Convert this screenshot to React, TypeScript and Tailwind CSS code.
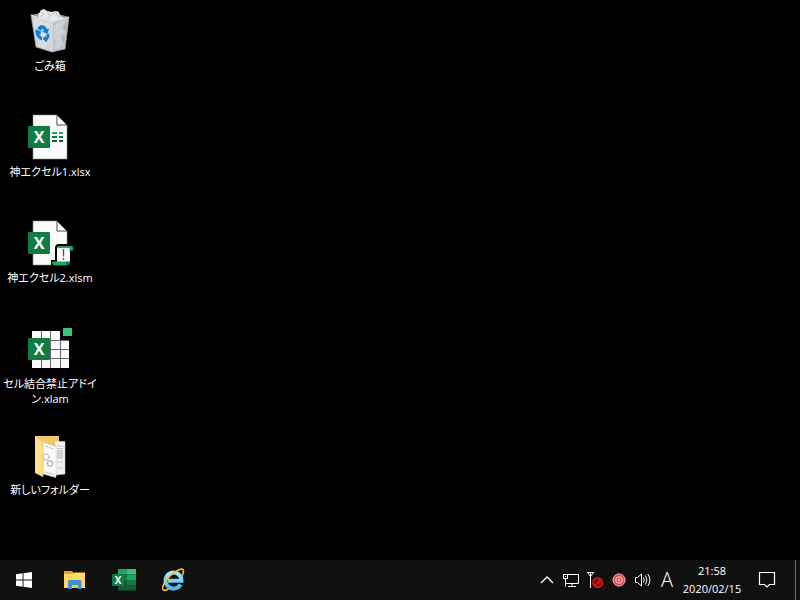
import type { ReactNode } from 'react';

const ExcelBadge = () => (
  <>
    <rect x="2" y="14" width="22" height="22" rx="1" fill="#107c41" />
    <text
      x="13"
      y="31"
      textAnchor="middle"
      fill="#fff"
      className="font-['Open_Sans',sans-serif] text-[16px] font-bold"
    >
      X
    </text>
  </>
);

const Page = () => (
  <>
    <path d="M7 3H31L41 13V47H7Z" fill="#fafafa" stroke="#8f8f8f" strokeWidth="0.6" />
    <path d="M31 3V13H41Z" fill="#fff" stroke="#4a4a4a" strokeWidth="1" />
  </>
);

const RecycleBinIcon = () => (
  <svg width="48" height="48" viewBox="0 0 48 48" aria-hidden="true">
    <path d="M5 9L22 5L43 11L26 16Z" fill="#8d9093" />
    <path d="M12 9L15 4L18 3L21 5L25 6L30 5L33 6L34 10L39 12L27 15.5L13 12Z" fill="#e6e8ea" />
    <path d="M15 5L18 8L15 11M21 5L24 10L30 6M24 10L22 13M30 6L33 12" fill="none" stroke="#b5b9bd" strokeWidth="0.8" />
    <path d="M5 9L26 16V46L10 41Z" fill="#d3d6d8" />
    <path d="M26 16L43 11L39 43L26 46Z" fill="#c3c6c9" />
    <path d="M8 14L14 12L18 17L24 16V24L20 28L24 34L18 42L12 39L14 34L9 28Z" fill="#dcdfe1" />
    <path d="M28 20L34 16L40 14L36 21L39 27L33 29L38 35L33 42L28 43L31 36L28 31Z" fill="#cfd2d4" />
    <path d="M41 14L37 21L40 26ZM39 29L35 32L38 37Z" fill="#acb0b3" />
    <path d="M5 9L26 16L43 11" fill="none" stroke="#e8eaeb" strokeWidth="1" />
    <path d="M5 9L10 41L26 46L39 43L43 11" fill="none" stroke="#a4a8ab" strokeWidth="0.7" />
    <path d="M26 16V46" stroke="#e2e4e5" strokeWidth="0.8" />
    <g fill="#1380d8">
      <path d="M12 21L15 19L19 20L21 23L23 22.5L21.5 28L16 25.5L18 24.5L16.5 22.5L14.8 25L11.5 22.8Z" />
      <path d="M10.5 23.5L15 25.5L14.5 28.5L13 28.5L16 31V34.5L13 33L10 29L9.3 25.5L9 24.5Z" />
      <path d="M20 28.8L23 27.5L23.5 31L21 34.7L20.5 36.5L16.6 32.8L20 29.5V31L21 30.5Z" />
    </g>
  </svg>
);

const XlsxIcon = () => (
  <svg width="48" height="48" viewBox="0 0 48 48" aria-hidden="true">
    <Page />
    <path d="M26 21H31M33 21H37" stroke="#21a366" strokeWidth="2" />
    <path d="M26 25H31M33 25H37" stroke="#107c41" strokeWidth="2" />
    <path d="M26 29H31M33 29H37" stroke="#185c37" strokeWidth="2" />
    <ExcelBadge />
  </svg>
);

const XlsmIcon = () => (
  <svg width="48" height="48" viewBox="0 0 48 48" aria-hidden="true">
    <Page />
    <path d="M29 30Q29 26 33 26H48V34H46V49H25V42H29Z" fill="#000" />
    <path d="M31 44V30.5Q31 28.5 33 28.5H44V44Z" fill="#fafafa" />
    <path d="M33 28H45Q48 28 47 32.5H43.5V30H32Q32 28.4 33 28Z" fill="#21a366" />
    <path d="M26 43.5H40V47.5H29Q26 47 26 43.5Z" fill="#21a366" />
    <path d="M40 43.5H44V45Q43.5 47.5 40 47.5Z" fill="#107c41" />
    <path d="M37.5 31V38.500M37.5 40V42" stroke="#555" strokeWidth="1.3" />
    <ExcelBadge />
  </svg>
);

const XlamIcon = () => (
  <svg width="48" height="48" viewBox="0 0 48 48" aria-hidden="true">
    <path d="M6 7H34V16H43V44H6Z" fill="#fafafa" />
    <path d="M15.5 7V44M24.5 7V44M34.5 16V44M6 16.5H43M6 25.5H43M6 34.5H43" stroke="#666" strokeWidth="1" />
    <rect x="37" y="4" width="9" height="8" fill="#33c481" />
    <ExcelBadge />
  </svg>
);

const FolderIcon = () => (
  <svg width="48" height="48" viewBox="0 0 48 48" aria-hidden="true">
    <path d="M9 6H33V40H9Z" fill="#f0c968" />
    <path d="M29 11L39 11.5V44L30 45Z" fill="#f1f1f1" stroke="#c9c9c9" strokeWidth="0.5" />
    <path d="M31 16H37M31 18.5H37M31 32H37M31 38H37" stroke="#b5b5b5" strokeWidth="0.7" />
    <rect x="31" y="20" width="6" height="9" fill="#d2d2d2" />
    <path d="M17 12L30 17V47.5L17 44Z" fill="#fafafa" stroke="#cfcfcf" strokeWidth="0.5" />
    <path d="M19 16L28 19" stroke="#888" strokeWidth="0.7" strokeDasharray="1.5 0.8" />
    <path d="M19 42L28 44.5" stroke="#aaa" strokeWidth="0.7" />
    <circle cx="20" cy="27" r="3" fill="none" stroke="#b8b8b8" strokeWidth="1.4" strokeDasharray="1.5 0.6" />
    <circle cx="24" cy="33.5" r="2.6" fill="none" stroke="#a5a5a5" strokeWidth="1.6" strokeDasharray="1.3 0.5" />
    <path d="M9 6L17 13V47L9 43Z" fill="#ffe08f" />
    <path d="M17 13V47" stroke="#e2b850" strokeWidth="0.6" />
  </svg>
);

interface DesktopItem {
  name: string;
  icon: ReactNode;
}

const desktopItems: DesktopItem[] = [
  { name: 'ごみ箱', icon: <RecycleBinIcon /> },
  { name: '神エクセル1.xlsx', icon: <XlsxIcon /> },
  { name: '神エクセル2.xlsm', icon: <XlsmIcon /> },
  { name: 'セル結合禁止アドイン.xlam', icon: <XlamIcon /> },
  { name: '新しいフォルダー', icon: <FolderIcon /> },
];

const WindowsIcon = () => (
  <svg width="24" height="24" viewBox="0 0 24 24" aria-hidden="true">
    <path d="M4 6.3L10.6 5.3V11.5H4ZM11.5 5.2L20 4V11.5H11.5ZM4 12.4H10.6V18.7L4 17.8ZM11.5 12.4H20V20L11.5 18.8Z" fill="#fff" />
  </svg>
);

const ExplorerIcon = () => (
  <svg width="24" height="24" viewBox="0 0 24 24" aria-hidden="true">
    <path d="M2 3H10L12 5H23V19H2Z" fill="#e8a320" />
    <path d="M2 6H10.5L12.5 4.5H23V20H2Z" fill="#ffd766" />
    <path d="M6 13.5Q6 12 7.5 12H18Q19.5 12 19.5 13.5V21H16V17H10V21H6Z" fill="#3c94cf" />
    <path d="M10 17H16V20H10Z" fill="#f5c44c" />
  </svg>
);

const ExcelIcon = () => (
  <svg width="24" height="24" viewBox="0 0 24 24" aria-hidden="true">
    <path d="M7 1H15V6.5H6V2Q6 1 7 1Z" fill="#21a366" />
    <path d="M15 1H23Q24 1 24 2V6.5H15Z" fill="#33c481" />
    <path d="M6 6.5H15V12H6Z" fill="#107c41" />
    <path d="M15 6.5H24V12H15Z" fill="#21a366" />
    <path d="M6 12H15V17.5H6Z" fill="#185c37" />
    <path d="M15 12H24V17.5H15Z" fill="#107c41" />
    <path d="M6 17.5H24V21.5Q24 22.5 23 22.5H7Q6 22.5 6 21.5Z" fill="#185c37" />
    <rect y="6" width="12" height="12" rx="1" fill="#107c41" />
    <text
      x="6"
      y="16"
      textAnchor="middle"
      fill="#fff"
      className="font-['Open_Sans',sans-serif] text-[10px] font-bold"
    >
      X
    </text>
  </svg>
);

const InternetExplorerIcon = () => (
  <svg width="24" height="24" viewBox="0 0 24 24" aria-hidden="true">
    <defs>
      <linearGradient id="ie-blue" x1="0" y1="0" x2="0" y2="1">
        <stop offset="0" stopColor="#a5e9fd" />
        <stop offset="1" stopColor="#45b8ec" />
      </linearGradient>
    </defs>
    <path
      d="M18.500 16.500A8 8 0 1 1 19.500 12.800H6"
      fill="none"
      stroke="url(#ie-blue)"
      strokeWidth="4"
    />
    <path
      d="M20.5 7C22.5 2.5 21.5 -0.5 16.5 2C9.5 5.5 3.5 12 1 18C-0.5 22.5 2.5 23.5 6 21"
      fill="none"
      stroke="#f5c033"
      strokeWidth="1.6"
      strokeLinecap="round"
    />
  </svg>
);

const ChevronIcon = () => (
  <svg width="24" height="24" viewBox="0 0 24 24" aria-hidden="true">
    <path d="M6 15L12 9L18 15" fill="none" stroke="#fff" strokeWidth="1.3" />
  </svg>
);

const NetworkIcon = () => (
  <svg width="24" height="24" viewBox="0 0 24 24" aria-hidden="true">
    <path d="M9 6.5H19.5V15.5H6.5V11M6.5 15.5V18.5M13 15.5V18.5M9 18.5H17" fill="none" stroke="#fff" />
    <rect x="4.5" y="6.5" width="4" height="4" fill="#111" stroke="#fff" />
    <path d="M6 8.5H7" stroke="#fff" />
  </svg>
);

const AntennaIcon = () => (
  <svg width="24" height="24" viewBox="0 0 24 24" aria-hidden="true">
    <path d="M4 4.5H11M4.5 4.5L7.5 8.5L10.5 4.5M7.5 4V20" fill="none" stroke="#fff" />
    <circle cx="14.7" cy="14.7" r="4.5" fill="#4a0505" stroke="#e01313" strokeWidth="2" />
    <path d="M11.5 18L18 11.5" stroke="#e01313" strokeWidth="2" />
  </svg>
);

const TargetIcon = () => (
  <svg width="24" height="24" viewBox="0 0 24 24" aria-hidden="true">
    <circle cx="12" cy="12" r="6.5" fill="#dd4a52" />
    <circle cx="12" cy="12" r="6" fill="none" stroke="#f4a3a6" strokeWidth="1" />
    <circle cx="12" cy="12" r="3.3" fill="none" stroke="#fbd5d6" strokeWidth="1" />
    <circle cx="12" cy="12" r="1.2" fill="#fbd5d6" />
  </svg>
);

const SpeakerIcon = () => (
  <svg width="24" height="24" viewBox="0 0 24 24" fill="none" stroke="#fff" aria-hidden="true">
    <path d="M4.5 9.5H6.5L10.5 6V18L6.5 14.5H4.5Z" />
    <path d="M12.5 9.5Q14 12 12.5 14.5M14.5 7.5Q17.3 12 14.5 16.5M16.8 6Q21 12 16.8 18" />
  </svg>
);

const NotificationIcon = () => (
  <svg width="24" height="24" viewBox="0 0 24 24" aria-hidden="true">
    <path d="M4.5 4.5H19.5V16.5H14.5L12 19L9.5 16.5H4.5Z" fill="none" stroke="#fff" strokeWidth="1.2" />
  </svg>
);

const pinnedApps = [
  { label: 'スタート', icon: <WindowsIcon /> },
  { label: 'エクスプローラー', icon: <ExplorerIcon /> },
  { label: 'Excel', icon: <ExcelIcon /> },
  { label: 'Internet Explorer', icon: <InternetExplorerIcon /> },
];

const trayItems = [
  { label: '隠れているインジケーターを表示します', icon: <ChevronIcon /> },
  { label: 'ネットワーク', icon: <NetworkIcon /> },
  { label: 'ワイヤレス', icon: <AntennaIcon /> },
  { label: 'レコーダー', icon: <TargetIcon /> },
  { label: 'スピーカー', icon: <SpeakerIcon /> },
];

const Desktop = () => (
  <main className="flex-1">
    <ul className="flex flex-col">
      {desktopItems.map((item) => (
        <li key={item.name} className="h-[106px] w-[100px]">
          <button className="flex w-full flex-col items-center gap-1 pt-1.5">
            {item.icon}
            <span className="w-full text-center text-[11px] leading-[15px] break-all">{item.name}</span>
          </button>
        </li>
      ))}
    </ul>
  </main>
);

const Taskbar = () => (
  <footer className="flex h-10 items-stretch justify-between bg-[#101010]">
    <nav className="flex gap-0.5">
      {pinnedApps.map((app) => (
        <button key={app.label} aria-label={app.label} className="flex w-12 items-center justify-center hover:bg-white/10">
          {app.icon}
        </button>
      ))}
    </nav>
    <div className="flex">
      {trayItems.map((item) => (
        <button key={item.label} aria-label={item.label} className="flex w-6 items-center justify-center hover:bg-white/10">
          {item.icon}
        </button>
      ))}
      <button className="flex w-6 items-center justify-center text-[20px] font-light hover:bg-white/10">A</button>
      <button className="w-[66px] py-0.5 text-center text-[11px] leading-[18px] hover:bg-white/10">
        <time dateTime="2020-02-15T21:58">
          <span className="block">21:58</span>
          <span className="block">2020/02/15</span>
        </time>
      </button>
      <button aria-label="通知" className="flex w-11 items-center justify-center hover:bg-white/10">
        <NotificationIcon />
      </button>
      <button aria-label="デスクトップの表示" className="ml-[6px] w-[5px] border-l border-[#6b6b6b]" />
    </div>
  </footer>
);

const App = () => (
  <div
    lang="ja"
    className="flex min-h-screen flex-col bg-black font-['Open_Sans','Noto_Sans_CJK_JP',sans-serif] text-white [font-feature-settings:'palt']"
  >
    <Desktop />
    <Taskbar />
  </div>
);

export default App;
